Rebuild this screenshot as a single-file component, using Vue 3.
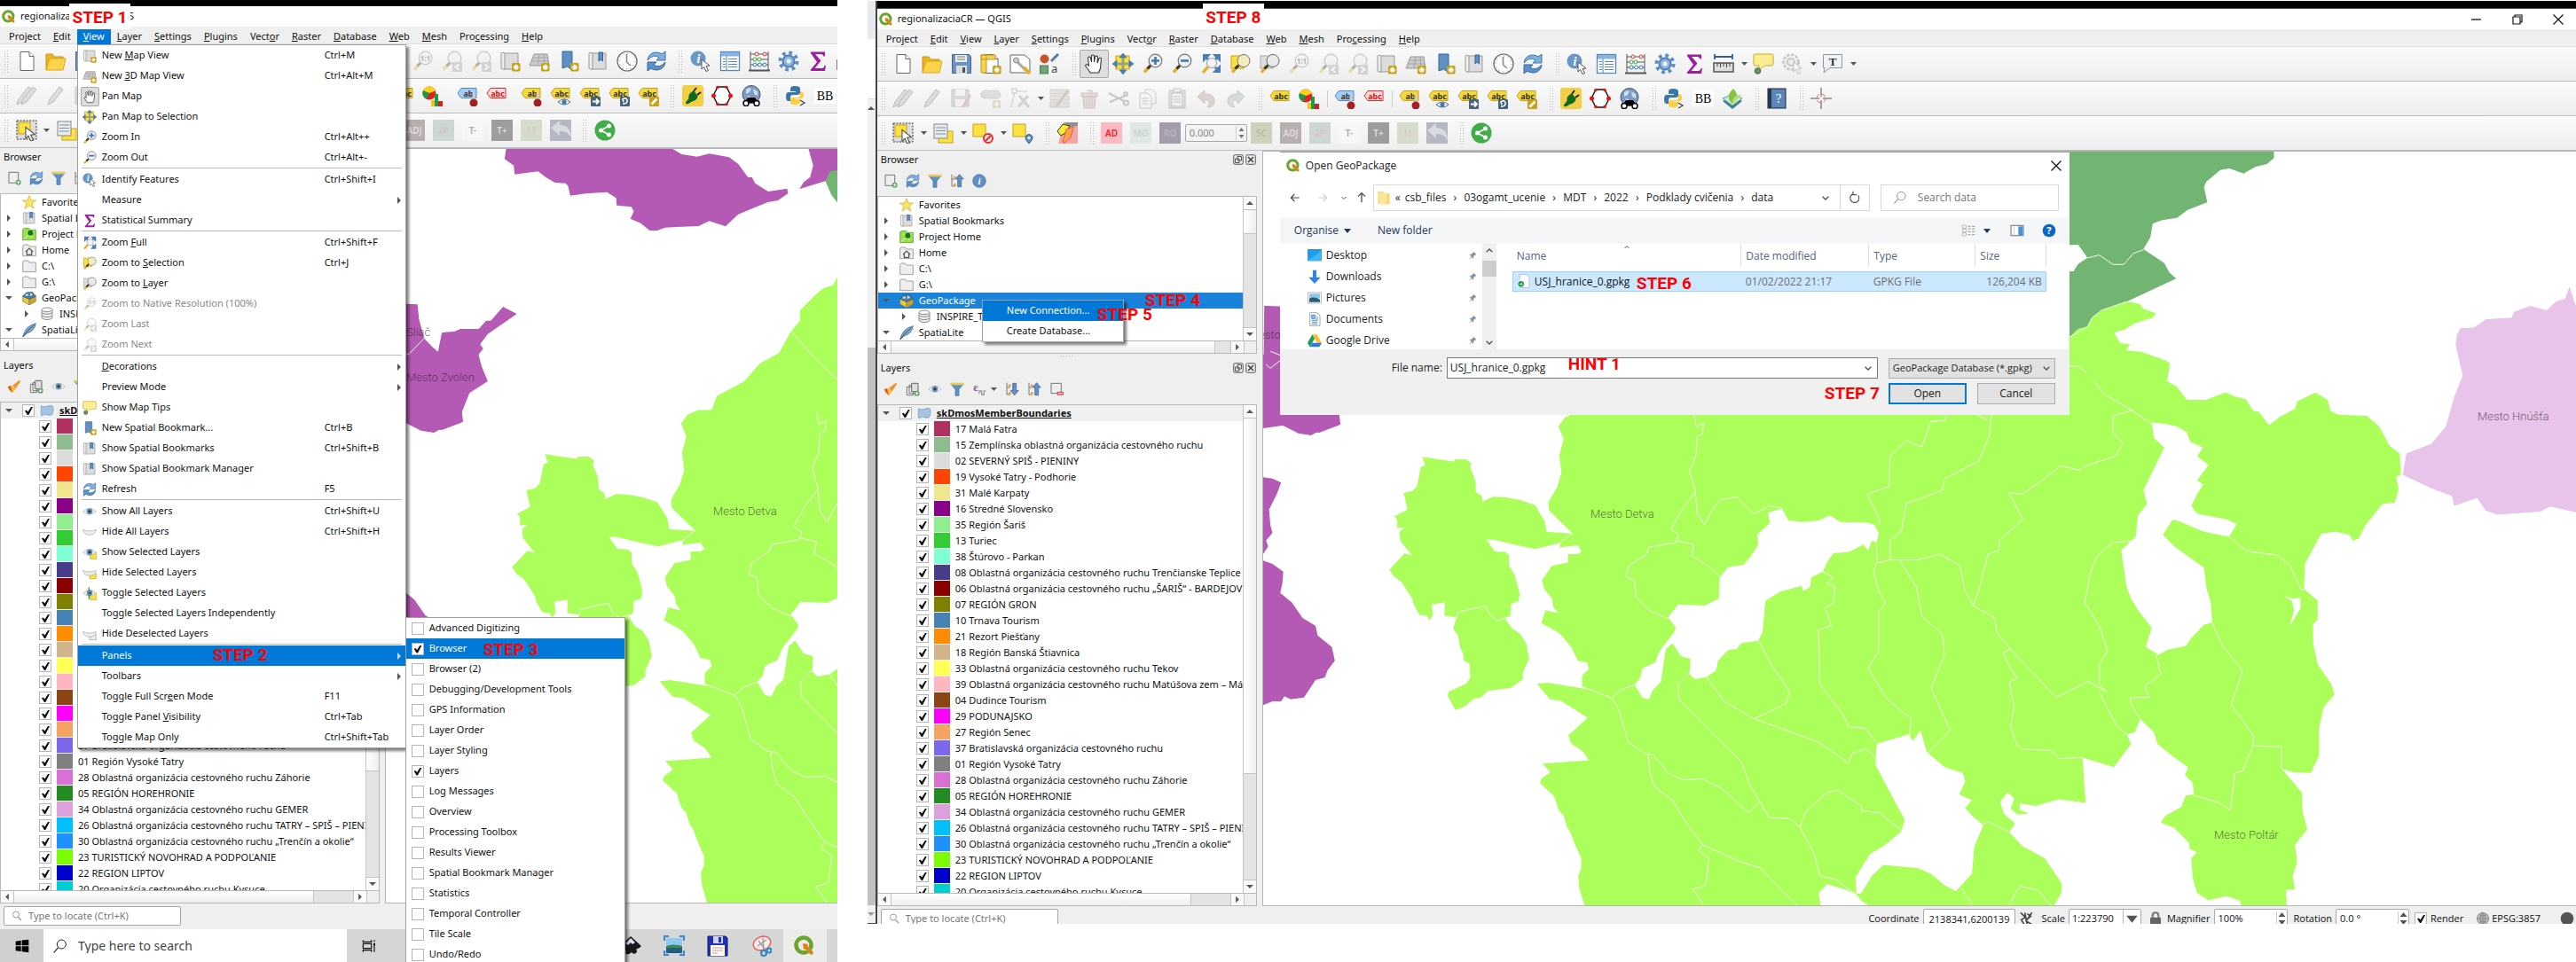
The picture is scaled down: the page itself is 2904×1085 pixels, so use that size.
<script setup>
const mark = (s) => {
  const i = s.indexOf('&')
  return i < 0 ? [s, '', ''] : [s.slice(0, i), s[i + 1], s.slice(i + 2)]
}

const badge = '<rect x="14" y="14" width="9.500" height="9.500" rx="1.500" fill="#c8a21a"/><path d="M18.800 15.500v6.600M15.500 18.800h6.600M16.600 16.600l4.400 4.400M21 16.600l-4.400 4.400" stroke="#fff" stroke-width="1.200"/>'
const lens = '<path d="M9.500 14.500L3 21.500" stroke="#e0b02c" stroke-width="3.400"/><path d="M10.500 13.500L6.500 17.500" stroke="#333" stroke-width="3"/>'
const ring = '<circle cx="15.500" cy="8.500" r="7.300" fill="#e9eef0" fill-opacity=".85" stroke="#777" stroke-width="1.200"/>'
const page = '<path d="M5 1.500h10l5 5v16H5z" fill="#fff" stroke="#666"/><path d="M15 1.500v5h5" fill="#fff" stroke="#666"/>'
const tag = (fill, line, ink, txt) => `<path d="M1 9l4-5.500h17v11H5z" fill="${fill}" stroke="${line}"/><text x="13" y="12.500" font-size="9" font-weight="700" text-anchor="middle" fill="${ink}">${txt}</text>`
const yTag = (t) => tag('#f3d93c', '#c8a21a', '#333', t)
const tile = (bg, ink, txt) => `<rect width="24" height="24" fill="${bg}"/><text x="12" y="16" font-size="10" font-weight="600" text-anchor="middle" fill="${ink}">${txt}</text>`
const sheet = '<path d="M4 3h17v18H4z" fill="#dcdcdc" stroke="#999"/><path d="M2 3q4-2 4 2v16H3.500q-2 0-1.500-3z" fill="#eee" stroke="#999"/>'
const eye = '<path d="M1 12q11-11 22 0-11 10-22 0z" fill="#f1f1ee" stroke="#aaa"/><circle cx="12" cy="11.500" r="5" fill="#6d93b8"/><circle cx="12" cy="11.500" r="2.300" fill="#234"/>'
const lid = '<path d="M1 8q11 5 22 0-1 9-11 9T1 8z" fill="#eceee8" stroke="#aaa"/>'
const folder = '<path d="M1 5l2-2h7l2 3h11v16H1z" fill="#eee" stroke="#999" stroke-width="1.400"/>'
const cursor = '<path d="M13 10l9 7-4 .500 2.500 5-2.500 1-2.300-5-2.700 2.500z" fill="#fff" stroke="#555"/>'
const pen = '<path d="M3 22l2-6L16 2l4 3L9 19z" fill="#ddd" stroke="#bbb"/>'

const icons = {
  qgis: '<circle cx="11" cy="11" r="8.500" fill="none" stroke="#6aa52c" stroke-width="4.500"/><path d="M11 11l3-1 8 9-3 3-8-8z" fill="#8bbf3a"/><path d="M10 9l6 1-1 2 7 8-2 2-7-7-2 1z" fill="#ee7913"/>',
  page,
  open: '<path d="M1 22V4h7l2 3h10v3" fill="#e8b523" stroke="#c9971a"/><path d="M1 22L5 9h18l-3 13z" fill="#fbd44a" stroke="#d9a520"/>',
  save: '<path d="M1.500 1.500h19l2 2v19h-21z" fill="#6c93c2" stroke="#3f6593"/><path d="M5 2h13v8H5z" fill="#eee"/><path d="M7 4h9M7 7h9" stroke="#777"/><path d="M6 14h12v9H6z" fill="#ddd"/><path d="M13 16h3v6h-3z" fill="#456"/>',
  layout: page + '<path d="M1 2h6v20H1zM1 2h16v5H1z" fill="#f3d257" stroke="#c39a17"/>' + badge,
  layouts: '<path d="M1 2h16l6 5v15H1z" fill="#fff" stroke="#666"/><path d="M7 8l11 11" stroke="#aaa" stroke-width="3"/><circle cx="7.500" cy="8" r="3" fill="#ccc" stroke="#888"/><path d="M16 16l7 7" stroke="#e0b02c" stroke-width="4"/>',
  style: '<circle cx="6.500" cy="6.500" r="5" fill="#c8532d"/><path d="M14 9l8-8" stroke="#4f7db3" stroke-width="3"/><rect x="1.500" y="14" width="9" height="9" fill="#6fa67a" stroke="#4a7c55"/><text x="14" y="22" font-size="13" fill="#444">a</text>',
  hand: '<path d="M8 22q-3-5-5.500-8 1-2.500 4 0L5.500 5q1.500-2 3 0l1 5V3q1.500-2 3 0v7l1-6q1.500-2 3 0l-.500 7 2-5q1.500-1.500 2.500 0l-1 11q-1 3-2 5z" fill="#fff" stroke="#333" stroke-width="1.100"/>',
  pansel: '<rect x="4" y="3" width="15" height="15" fill="#fbe23e" stroke="#c8a21a"/><path d="M12 0l4 5H8zM12 24l4-5H8zM0 12l5-4v8zM24 12l-5-4v8z" fill="#4f7db3" stroke="#34618f" stroke-width=".500"/><path d="M10.500 4h3v16h-3zM4 10.500h16v3H4z" fill="#4f7db3" fill-opacity=".6"/>',
  zin: lens + ring + '<path d="M15.500 4v9M11 8.500h9" stroke="#4a76ad" stroke-width="2.600"/>',
  zout: lens + ring + '<path d="M11 8.500h9" stroke="#4a76ad" stroke-width="2.600"/>',
  zfull: '<path d="M4 2l6 0-6 6zM22 2h-6l6 6zM22 21h-6l6-6z" fill="#4f7db3" stroke="#4f7db3" stroke-width="2"/><path d="M5 3l4 4M21 3l-4 4M21 20l-4-4" stroke="#4f7db3" stroke-width="3"/><circle cx="13" cy="11" r="5.500" fill="#f2f4f4" stroke="#999"/><path d="M9 15l-6 7" stroke="#e0b02c" stroke-width="3.400"/>',
  zsel: '<rect x="2" y="3" width="14" height="14" fill="#fbe23e" stroke="#c8a21a"/>' + lens + '<circle cx="16" cy="8.500" r="7" fill="#f3ecc0" stroke="#777"/>',
  zlay: '<rect x="2" y="3" width="14" height="14" fill="#ddd" stroke="#aaa"/>' + lens + '<circle cx="16" cy="8.500" r="7" fill="#eaeaea" stroke="#666"/>',
  znat: '<g opacity=".35">' + lens + ring + '<text x="15.500" y="12" font-size="8" font-weight="700" text-anchor="middle" fill="#333">1:1</text></g>',
  zlast: '<g opacity=".35">' + lens + ring + '<rect x="13" y="13" width="11" height="11" fill="#999"/><path d="M20.500 15.500l-4 3 4 3" fill="none" stroke="#fff" stroke-width="2"/></g>',
  znext: '<g opacity=".35">' + lens + ring + '<rect x="13" y="13" width="11" height="11" fill="#999"/><path d="M16.500 15.500l4 3-4 3" fill="none" stroke="#fff" stroke-width="2"/></g>',
  newmap: sheet + badge,
  new3d: '<path d="M6 4h15l2 13H1z" fill="#ccc" stroke="#999"/><path d="M5 8h17M3 12h19M12 4l-2 13M17 4l1 13" stroke="#999" stroke-width=".700"/>' + badge,
  bmnew: '<path d="M5 1h11v21l-5.500-4L5 20z" fill="#5f8fc4" stroke="#3c6794"/>' + badge,
  bms: sheet + '<path d="M13 2h4.500v10l-2.200-2-2.300 2z" fill="#5f8fc4" stroke="#34618f"/>',
  clock: '<circle cx="12" cy="12" r="11" fill="#fdfdfd" stroke="#666" stroke-width="1.200"/><circle cx="12" cy="12" r="9" fill="none" stroke="#5588bb" stroke-dasharray="1 3.700"/><path d="M11.500 4v9l4.500 4" fill="none" stroke="#888" stroke-width="1.600"/>',
  refresh: '<path d="M2 11q1-8 9-9 5 0 7 2l4-3v10H12l3-3q-6-5-13 3z" fill="#7fb0e0" stroke="#3f74ad"/><path d="M22 13q-1 8-9 9-5 0-7-2l-4 3V13h10l-3 3q6 5 13-3z" fill="#5c92cb" stroke="#34659b"/>',
  ident: '<circle cx="9" cy="9" r="8.500" fill="#6b97c8"/><text x="9.500" y="14" font-size="14" font-style="italic" font-weight="700" text-anchor="middle" fill="#fff" font-family="Liberation Serif">i</text>' + cursor,
  info: '<circle cx="12" cy="12" r="11" fill="#5f8fc4" stroke="#43719f"/><text x="12" y="18" font-size="17" font-style="italic" font-weight="700" text-anchor="middle" fill="#fff" font-family="Liberation Serif">i</text>',
  table: '<rect x="1.500" y="1.500" width="21" height="21" fill="#fff" stroke="#5588bb" stroke-width="1.300"/><path d="M2 2h20v4.500H2z" fill="#8ab3df"/><path d="M8 6v16M4 9.500h3M4 12.500h3M4 15.500h3M4 18.500h3M10 9.500h10M10 12.500h10M10 15.500h10M10 18.500h10" stroke="#5588bb"/>',
  abacus: '<path d="M2 1v21M22 1v21M2 4h20M2 10h20M2 16h20" stroke="#555" fill="none"/><path d="M0 22.500h24" stroke="#555" stroke-width="2"/><g fill="#fff"><g stroke="#d33"><circle cx="9" cy="4" r="2"/><circle cx="18" cy="4" r="2"/></g><g stroke="#3a3"><circle cx="7" cy="10" r="2"/><circle cx="12" cy="10" r="2"/></g><g stroke="#37b"><circle cx="7" cy="16" r="2"/><circle cx="12.500" cy="16" r="2"/><circle cx="18" cy="16" r="2"/></g></g>',
  gear: '<circle cx="12" cy="12" r="9.500" fill="none" stroke="#5b8cc4" stroke-width="4" stroke-dasharray="3.700 3.760"/><circle cx="12" cy="12" r="6.500" fill="#8fb6e2" stroke="#4f7fb8" stroke-width="2"/><circle cx="12" cy="12" r="2.500" fill="#f4f4f4"/>',
  sigma: '<path d="M4 1.500h16v5h-1.500q-.500-2.500-3-2.500H9l6.500 7.500L8.500 20h8q2.500 0 3-3H21l-1 6H4v-1.500L11 13 4 3z" fill="#9b1f9b"/>',
  measure: '<path d="M2 1v6M22 1v6M2 4h20" stroke="#345f8c" stroke-width="1.800"/><path d="M1 11h22v10H1z" fill="#ddd" stroke="#555" stroke-width="1.500"/><path d="M5 11v4M8.500 11v5M12 11v4M15.500 11v5M19 11v4" stroke="#444"/>',
  tip: '<path d="M3 1h18q2 0 2 2v9q0 2-2 2h-8l-6 5v-5H3q-2 0-2-2V3q0-2 2-2z" fill="#fbee90" stroke="#c8a92a"/><circle cx="5.500" cy="20" r="3.300" fill="#6b8f5a" stroke="#466"/>',
  action: '<g opacity=".3"><circle cx="10" cy="10" r="8.500" fill="#ddd" stroke="#555" stroke-width="2.500" stroke-dasharray="3 2"/><circle cx="10" cy="10" r="4" fill="none" stroke="#666" stroke-width="2"/>' + cursor + '</g>',
  tnote: '<path d="M1.500 1.500h21v15H9L2 22l1-5.500H1.500z" fill="#eff3f5" stroke="#8a98a5"/><text x="12" y="13.500" font-size="13" font-weight="700" text-anchor="middle" fill="#333" font-family="Liberation Serif">T</text>',
  pens: '<g transform="translate(-2 0)">' + pen + '</g><g transform="translate(3 0)">' + pen + '</g>',
  pen,
  savee: '<g opacity=".3"><path d="M1 2h19v19H1z" fill="#999" stroke="#666"/><path d="M5 2h11v7H5zM5 13h11v8H5z" fill="#eee"/><path d="M13 22l9-14" stroke="#a66" stroke-width="3"/></g>',
  addf: '<g opacity=".4"><path d="M1 8q0-5 6-5 4 1 8 0 8 0 8 6-1 4-7 3-8-1-11 0-4 0-4-4z" fill="#bbb" stroke="#999"/><rect x="14" y="14" width="9" height="9" fill="#cbb98a"/><path d="M18.500 15.500v6M15.500 18.500h6" stroke="#fff" stroke-width="1.500"/></g>',
  vert: '<g opacity=".45"><path d="M2 22L6 4h14" fill="none" stroke="#999"/><rect x="3" y="1" width="5" height="5" fill="#fff" stroke="#888"/><path d="M10 21L21 9M11 9l11 13" stroke="#aaa" stroke-width="3"/></g>',
  multi: '<g opacity=".4"><path d="M1 2h21v5H1zM1 9h21v5H1zM1 16h21v6H1z" fill="#c9c9b4" stroke="#999"/><path d="M8 21L21 3" stroke="#a88" stroke-width="3"/></g>',
  bin: '<g opacity=".45"><path d="M3 6h18v4H3zM5 10h14l-1 13H6zM9 3h6v3" fill="#d4bcbc" stroke="#a88"/><path d="M9 12v9M12 12v9M15 12v9" stroke="#a99"/></g>',
  cut: '<g opacity=".35" stroke="#777" fill="none" stroke-width="2"><path d="M1 6l17 9M2 16l20-8"/><circle cx="20.500" cy="17" r="2.600"/><circle cx="20" cy="7" r="2"/></g>',
  copy: '<g opacity=".45" fill="#f4f4f4" stroke="#999"><path d="M9 2h8l4 4v12H9z"/><path d="M3 6h9l4 4v13H3z"/><path d="M5.500 12h7M5.500 15h7M5.500 18h7"/></g>',
  paste: '<g opacity=".45" fill="#eee" stroke="#888"><rect x="3" y="3" width="18" height="20" fill="#ccc"/><rect x="6" y="6" width="12" height="15"/><path d="M8 1h8v4H8zM8 10h8M8 13h8M8 16h8"/></g>',
  undo: '<path d="M2 10l8-7v4q12 0 11 9-1 6-8 6 6-9-3-8v4z" fill="#ddd4d2" stroke="#cfc6c4"/>',
  redo: '<path d="M22 10l-8-7v4Q2 7 3 16q1 6 8 6-6-9 3-8v4z" fill="#d6dcd8" stroke="#c6cec9"/>',
  abc: yTag('abc'),
  diag: '<circle cx="8" cy="9" r="7.500" fill="#d22"/><path d="M8 9V1.500a7.500 7.500 0 0 1 7 5z" fill="#f6d21c"/><path d="M8 9L1 6.500a7.500 7.500 0 0 1 7-5z" fill="#f6d21c"/><path d="M8 9L1 6a7.500 7.500 0 0 0 4 10z" fill="#1c9a4a"/><path d="M10 17h4v7h-4z" fill="#f6c21c"/><path d="M14 10h4v14h-4z" fill="#1c9a4a"/><path d="M18 18h5v6h-5z" fill="#c22"/>',
  abb: tag('#a9ccf5', '#4a8ad6', '#333', 'ab') + '<path d="M19 9v9" stroke="#ccc" stroke-width="3"/><circle cx="19" cy="20" r="4.500" fill="#a32020"/>',
  abr: tag('#fdd', '#e22', '#d11', 'abc'),
  aby: yTag('ab') + '<path d="M19 9v9" stroke="#ccc" stroke-width="3"/><circle cx="19" cy="20" r="4.500" fill="#a32020"/>',
  abe: yTag('abc') + '<path d="M9 19q7-6 14 0-7 6-14 0z" fill="#fff" stroke="#567"/><circle cx="16" cy="19" r="2.600" fill="#357bc0"/>',
  abm: yTag('abc') + '<rect x="13" y="13" width="11" height="11" rx="1" fill="#46647d"/><path d="M15 18.500h7M19 15.500l3 3-3 3" stroke="#fff" stroke-width="1.800" fill="none"/>',
  abo: yTag('abc') + '<rect x="13" y="13" width="11" height="11" rx="1" fill="#46647d"/><path d="M16 21q6 0 5-4t-5-1l1 3" stroke="#fff" stroke-width="1.600" fill="none"/>',
  abp: yTag('abc') + '<rect x="13" y="13" width="11" height="11" rx="1" fill="#c8a21a"/><path d="M15.500 21.500l6-6" stroke="#fff" stroke-width="2.600"/>',
  plug: '<rect width="24" height="24" rx="3" fill="#f3cf45"/><path d="M4 20l4-5q-1-6 5-8l4 5q0 5-6 6l-5 3z" fill="#0d6b18" stroke="#063"/><path d="M13 7l3-4M17 11l4-3" stroke="#222" stroke-width="2"/>',
  hexa: '<path d="M2 12l5-10h10l5 10-5 10H7z" fill="#fff" stroke="#111" stroke-width="1.400"/><g fill="#e11"><circle cx="2.500" cy="12" r="2.500"/><circle cx="21.500" cy="12" r="2.500"/><circle cx="7" cy="2.500" r="1.800"/><circle cx="17" cy="2.500" r="1.800"/><circle cx="7" cy="21.500" r="1.800"/><circle cx="17" cy="21.500" r="1.800"/></g>',
  bino: '<circle cx="12" cy="10.500" r="10" fill="#7c9cc4" stroke="#456"/><path d="M6 5q3-3 6-1l-2 4-4 2zM14 4l5 3v5l-4-2zM7 12l4 1-1 4z" fill="#cfdcea"/><path d="M4 20l4-6h8l4 6z" fill="#000"/><circle cx="6" cy="20.500" r="3" fill="#fff" stroke="#000" stroke-width="1.500"/><circle cx="18" cy="20.500" r="3" fill="#fff" stroke="#000" stroke-width="1.500"/>',
  py: '<path d="M11 1q-5 0-5 3v3h6v1H4q-3 0-3 5t3 5h2v-4q0-3 3-3h5q3 0 3-3V4q0-3-6-3z" fill="#3b76a8"/><path d="M12 22q5 0 5-3v-3h-6v-1h8q2-1 2-4t-3-4h-1v4q0 3-3 3H9q-3 0-3 3v3q1 2 6 2z" fill="#fbcf3c"/><path d="M17 17l5 3-5 3" fill="none" stroke="#444" stroke-width="1.300"/>',
  bb: '<rect y="3" width="24" height="18" fill="#fff"/><text x="12" y="17" font-size="14" text-anchor="middle" fill="#000" font-family="Liberation Serif">BB</text>',
  leaf: '<path d="M1 15l11-6 11 6-11 9z" fill="#3f7f8c"/><path d="M1 12l11-5 11 5-11 8z" fill="#cfe6dd" stroke="#5a9"/><path d="M12 18Q3 10 13 1q9 9-1 17z" fill="#86c540"/><path d="M12 18q6-5 10-10-10-1-10 10z" fill="#b9dc6a"/>',
  help: '<rect x="2" y="1" width="20" height="22" fill="#5b86b8" stroke="#223"/><path d="M2 1h4v22H2z" fill="#27364a"/><text x="14" y="17" font-size="15" text-anchor="middle" fill="#fff" font-family="Liberation Serif">?</text>',
  cross: '<path d="M12 0v10M12 14v10M0 12h10M14 12h10" stroke="#555"/><circle cx="12" cy="12" r="5" fill="none" stroke="#d66" stroke-dasharray="5 3"/>',
  sel: '<rect x="1" y="1" width="22" height="21" fill="#ddd" stroke="#333" stroke-dasharray="2 1.500"/><rect x="3" y="3" width="13" height="13" fill="#fbe23e" stroke="#c8a21a"/><g transform="translate(-4 -3) scale(1.150)">' + cursor + '</g>',
  form: '<rect x="7" y="10" width="16" height="13" fill="#fbe23e" stroke="#c8a21a"/><rect x="2" y="2" width="15" height="16" fill="#e8eaec" stroke="#888"/><path d="M4 6h11M4 9.500h11M4 13h11" stroke="#7a93ad"/>',
  desel: '<rect x="1" y="2" width="14" height="14" fill="#fbe23e" stroke="#c8a21a"/><circle cx="18" cy="18" r="5" fill="#fbe9e9" stroke="#d33" stroke-width="2"/><path d="M15 21l6-6" stroke="#d33" stroke-width="2"/>',
  selloc: '<rect x="1" y="2" width="14" height="14" fill="#fbe23e" stroke="#c8a21a"/><path d="M19 24q-5-5-4-8 4-5 8 0 1 3-4 8z" fill="#5f8fc4" stroke="#34618f"/><circle cx="19" cy="17.500" r="1.600" fill="#fff"/>',
  topo: '<path d="M8 0h16v24H2l3-12z" fill="#f6a5a5"/><path d="M8 0h16v4l-8 1z" fill="#8f8f8f"/><path d="M1 10l6-8 8 2-5 8-5 3z" fill="#f7ef2e" stroke="#333"/><path d="M7 22l4-14 8-3-3 12-7 6z" fill="#f9a34a" stroke="#e55"/>',
  ad: tile('#fbb9c3', '#e22', 'AD'),
  mo: tile('#dfe8e2', '#c9d6cd', 'MO'),
  ro: tile('#a39dab', '#bcb3c4', 'RO'),
  sc: tile('#cfd1bd', '#b7bca2', 'SC'),
  adj: tile('#b8afaf', '#e2dcdc', 'ADJ'),
  p2: tile('#ccd6d4', '#d9c3c6', '2P'),
  tm: tile('#f7f7f7', '#aaa', 'T-'),
  tp: tile('#9d9d9d', '#ddd', 'T+'),
  ex: tile('#d5dccb', '#dcc0c0', '! !'),
  back: '<rect width="24" height="24" fill="#b5b7c2"/><path d="M1 9l10-8v5q12 0 13 14-5-8-13-7v5z" fill="#d9dbe0"/>',
  share: '<circle cx="12" cy="12" r="11.500" fill="#41ad49"/><path d="M16.500 7l-9 5 9 5" fill="none" stroke="#fff" stroke-width="1.600"/><g fill="#fff"><circle cx="16.500" cy="7" r="2.500"/><circle cx="7.500" cy="12" r="2.500"/><circle cx="16.500" cy="17" r="2.500"/></g>',
  addlay: '<path d="M3 2h16v18H3z" fill="#eee" stroke="#777" stroke-width="1.500"/><circle cx="19" cy="19" r="4.500" fill="#5fa56a"/><path d="M19 16.500v5M16.500 19h5" stroke="#fff" stroke-width="1.500"/>',
  filter: '<path d="M1 3h22l-8 9v11h-6V12z" fill="#5f8fc4" stroke="#43719f"/><path d="M1 1h22v4H1z" fill="#e6cf56"/>',
  collapse: '<path d="M3 1v20h5M3 9h5" fill="none" stroke="#777" stroke-width="1.500"/><path d="M6 4h4v4H6zM6 17h4v4H6z" fill="#f29a2e"/><path d="M16 1l7 8h-4v13h-6V9H9z" fill="#5f8fc4" stroke="#34618f"/>',
  expand: '<path d="M3 1v20h5M3 9h5" fill="none" stroke="#777" stroke-width="1.500"/><path d="M6 4h4v4H6zM6 17h4v4H6z" fill="#f29a2e"/><path d="M16 22l7-8h-4V2h-6v12H9z" fill="#5f8fc4" stroke="#34618f"/>',
  brush: '<path d="M1 12l7-2 6 7-5 6q-5-3-8-11z" fill="#f2c13a"/><path d="M1 12l5-1 3 11q-5-3-8-10z" fill="#e0542c"/><path d="M9 10l5 6 9-13q-2-2-3-1z" fill="#e9963a"/>',
  group: '<path d="M2 8h11v14H2zM6 5h11v14H6z" fill="#eee" stroke="#777" stroke-width="1.500"/><path d="M10 2h11v14H10z" fill="#ddd" stroke="#666" stroke-width="1.500"/><circle cx="19" cy="19" r="4.500" fill="#5fa56a"/><path d="M19 16.500v5M16.500 19h5" stroke="#fff" stroke-width="1.500"/>',
  eye, lid,
  eyesel: '<path d="M13 12h11v11H13z" fill="#fbe23e" stroke="#c8a21a"/>' + eye,
  lidsel: '<path d="M12 13h11v9H12z" fill="#fbe23e" stroke="#c8a21a"/>' + lid,
  toggle: '<path d="M13 12h11v11H13z" fill="#fbe23e" stroke="#c8a21a"/>' + eye + '<path d="M11 2v20" stroke="#4a9a4a" stroke-width="2"/>',
  liddes: '<path d="M12 13h11v9H12z" fill="#eee" stroke="#999"/>' + lid,
  eps: '<text x="2" y="15" font-size="20" font-weight="700" fill="#8a5a9a" font-family="Liberation Serif">ε</text><path d="M12 20v-5h4v6h4v-6h3" fill="none" stroke="#999" stroke-width="2"/>',
  remove: '<path d="M3 2h17v17H3z" fill="#eee" stroke="#777" stroke-width="1.500"/><rect x="13" y="16" width="11" height="6" rx="1" fill="#e05252"/><path d="M15 19h7" stroke="#fff" stroke-width="1.600"/>',
  star: '<path d="M12 1l3 8h8.500l-7 5 3 9L12 17.500 4.500 23l3-9-7-5H9z" fill="#fbe564" stroke="#d0a818"/>',
  proj: '<path d="M1 4l3-2h7l2 3h10v17H1z" fill="#9be04a" stroke="#4a8a2a"/><path d="M3 20L20 7M9 8l8 10" stroke="#e8f7c8" stroke-width="1.500"/><circle cx="14" cy="10" r="4.500" fill="#137a1b"/>',
  home: folder + '<path d="M6 15l6-6 6 6M8 14v6h8v-6" fill="none" stroke="#555" stroke-width="1.800"/>',
  folder,
  gpkg: '<path d="M1 9l11 5v10L1 18z" fill="#e9c93a" stroke="#775"/><path d="M23 9l-11 5v10l11-6z" fill="#c9a52a" stroke="#775"/><path d="M1 9l6-6 10-1 6 7-11 5z" fill="#4f7ea8" stroke="#345"/><path d="M7 5l4 1-2 3-4-1zM14 3l4 4-5 2z" fill="#cfe0ee"/>',
  db: '<path d="M3 5v14q9 6 18 0V5" fill="#eee" stroke="#888" stroke-width="1.400"/><ellipse cx="12" cy="5" rx="9" ry="3.500" fill="#f6f6f6" stroke="#888" stroke-width="1.400"/><path d="M3 10q9 5 18 0M3 15q9 5 18 0" fill="none" stroke="#888" stroke-width="1.400"/>',
  feather: '<path d="M1 24Q5 5 23 1q-1 12-15 17z" fill="#7aa6cf" stroke="#335a80"/><path d="M1 24Q9 12 20 4" stroke="#234" fill="none"/>',
  poly: '<path d="M2 4q6 3 10 1 6-3 10 0 2 6-1 13-3 4-9 1-5-2-9 2-2-2-1-8z" fill="#a6c4e2" stroke="#6d95bd"/>',
  mag: '<circle cx="10" cy="9" r="7" fill="none" stroke="#999" stroke-width="2"/><path d="M15 15l7 7" stroke="#999" stroke-width="2.400"/>',
  float: '<rect x="1.500" y="1.500" width="21" height="21" rx="3" fill="#eee" stroke="#555" stroke-width="2"/><path d="M10 5h9v9h-9zM5 10h9v9H5z" fill="none" stroke="#555" stroke-width="2"/>',
  close: '<rect x="1.500" y="1.500" width="21" height="21" rx="3" fill="#eee" stroke="#555" stroke-width="2"/><path d="M6 6l12 12M18 6L6 18" stroke="#444" stroke-width="3.400"/>',
  winmin: '<path d="M6 12h11" stroke="#111" stroke-width="1.300"/>',
  winres: '<path d="M7 9h8v8H7zM9 9V7h8v8h-2" fill="none" stroke="#111" stroke-width="1.200"/>',
  winx: '<path d="M6.500 6.500l11 11M17.500 6.500l-11 11" stroke="#111" stroke-width="1.200"/>',
  left: '<path d="M19 12H5M11 6l-6 6 6 6" fill="none" stroke="#444" stroke-width="1.700"/>',
  right: '<path d="M5 12h14M13 6l6 6-6 6" fill="none" stroke="#ccc" stroke-width="1.700"/>',
  up: '<path d="M12 20V4M6 10l6-6 6 6" fill="none" stroke="#444" stroke-width="1.900"/>',
  down: '<path d="M7 10l5 5 5-5" fill="none" stroke="#555" stroke-width="2"/>',
  caretup: '<path d="M7 14l5-5 5 5" fill="none" stroke="#555" stroke-width="2"/>',
  reload: '<path d="M17.500 8a7.500 7.500 0 1 1-8-2.500M9 1v6h6" fill="none" stroke="#555" stroke-width="1.800"/>',
  search: '<circle cx="14" cy="9" r="7" fill="none" stroke="#999" stroke-width="1.500"/><path d="M9 14l-7 8" stroke="#999" stroke-width="1.700"/>',
  views: '<g fill="#fff" stroke="#999"><path d="M2 3h6v5H2zM2 9.500h6v5H2zM2 16h6v5H2z"/></g><path d="M11 5h5M18 5h5M11 9h5M18 9h5M11 14h5M18 14h5M11 19h5M18 19h5" stroke="#999" stroke-width="1.500"/>',
  pane: '<rect x="1.500" y="3.500" width="21" height="17" fill="#fff" stroke="#777" stroke-width="1.600"/><path d="M14 5h7.500v15H14z" fill="#3d94e0"/><path d="M7 5v15" stroke="#bbb"/>',
  ask: '<circle cx="12" cy="12" r="11" fill="#0a66c2"/><text x="12" y="18" font-size="17" font-weight="700" text-anchor="middle" fill="#fff">?</text>',
  fold: '<path d="M2 2h9l3 3h8v18H2z" fill="#f7d774"/><path d="M4 4h13v19H4z" fill="#fde79b"/>',
  desktop: '<rect x="1" y="2" width="22" height="19" fill="#1e9df0" stroke="#0b76c4"/><path d="M1 21L23 5v16z" fill="#43b4fa"/>',
  dl: '<path d="M9 1h6v12h7L12 24 2 13h7z" fill="#2f86d8"/>',
  pics: '<rect x="1" y="3" width="22" height="18" fill="#fff" stroke="#999"/><path d="M3 5h18v8H3z" fill="#8cc4ea"/><path d="M3 13q9-4 18 2v4H3z" fill="#2b5b7d"/>',
  docs: '<path d="M4 1h12l5 5v17H4z" fill="#fff" stroke="#777"/><path d="M7 5h6v6H7zM7 14h10M7 17h10M7 20h10M15 9h3M15 12h3" stroke="#4a90d0" fill="#8cc0ee" stroke-width="1.500"/>',
  gdrive: '<path d="M8 2h8l8 14h-8z" fill="#fbc02d"/><path d="M8 2L0 16l4 7 8-14z" fill="#1e9e57"/><path d="M24 16H8l-4 7h16z" fill="#3079e8"/>',
  pin: '<path d="M12 2l9 8-3 1-4 4v5l-4-4-6 6 5-8-4-4 5-1 4-4z" fill="#8895a3"/>',
  gfile: '<path d="M5 1h11l5 5v17H5z" fill="#fff" stroke="#aaa"/><circle cx="7" cy="17" r="6" fill="#fff"/><circle cx="7" cy="17" r="5" fill="#1b9a4b"/><path d="M4 17h5M7 14.500l2.500 2.500L7 19.500" stroke="#fff" fill="none"/>',
  lock: '<path d="M7 11V7q0-5 5-5t5 5v4" fill="none" stroke="#777" stroke-width="3"/><rect x="3" y="10" width="18" height="14" rx="2" fill="#666"/>',
  track: '<path d="M3 2l8 8-7 4 5 8M10 2l4 20M14 4l6 4-7 6M22 2L12 16l10 6" fill="none" stroke="#444" stroke-width="2.400"/>',
  globe: '<circle cx="12" cy="12" r="10" fill="#bbb" stroke="#777"/><path d="M2 12h20M12 2v20M5 5q7 5 14 0M5 19q7-5 14 0M12 2q-9 10 0 20M12 2q9 10 0 20" fill="none" stroke="#777"/>',
  bubble: '<circle cx="12" cy="12" r="11" fill="#555"/>',
  win: '<path d="M1 4l9-1.500V11H1zM11.500 2.300L23 1v10H11.500zM1 12.500h9V21l-9-1.300zM11.500 12.500H23V23l-11.500-1.500z" fill="#000"/>',
  srch: '<circle cx="14" cy="9" r="7.500" fill="none" stroke="#222" stroke-width="1.500"/><path d="M8.500 14.500L1 23" stroke="#222" stroke-width="1.700"/>',
  tview: '<path d="M2 8h14v8H2zM2 2v3h14V2M2 22v-3h14v3M21 2v3M21 9v13" fill="none" stroke="#111" stroke-width="1.800"/><path d="M19.500 7h3v4h-3z" fill="#111"/>',
  exp: '<path d="M1 2h9l3 3h10v18H1z" fill="#f9c23c"/><path d="M6 13h17v10H6z" fill="#3d94e0"/>',
  ink: '<path d="M12 1l12 11q-3 4-6 3 2 3 0 5-3 2-5-1-4 4-7 1 2-3-1-4-5 0-5-4z" fill="#1a1a1a"/><path d="M12 3l5 5-3 2-2-2-3 3-3-2z" fill="#dfe8f2"/>',
  shot: '<rect x="3" y="3" width="18" height="17" fill="#8fc9ef"/><path d="M3 13h18v7H3z" fill="#1d5f86"/><path d="M3 12q8-3 18 0v2H3z" fill="#3c8a50"/><path d="M1 6V1h5M18 1h5v5M23 17v5h-5M6 22H1v-5" stroke="#3c86c8" stroke-width="2" fill="none"/>',
  disk: '<path d="M1 1h20l2 2v20H1z" fill="#2230b8" stroke="#111a70"/><path d="M7 1h11v8H7z" fill="#cdd3f2"/><path d="M13 2h3v6h-3z" fill="#2230b8"/><path d="M4 11h16v12H4z" fill="#fff"/><path d="M6 14h12M6 17h12M6 20h6" stroke="#e88"/>',
  snip: '<ellipse cx="13" cy="9" rx="10" ry="7.500" transform="rotate(-20 13 9)" fill="#fbeaea" stroke="#e06a6a" stroke-width="1.600"/><path d="M8 12l10-7M14 3l1 14M9 6l9 12" stroke="#999" stroke-width="1.300"/><circle cx="15" cy="20" r="3" fill="none" stroke="#2f86c8" stroke-width="2"/><circle cx="21" cy="17" r="2.500" fill="none" stroke="#2f86c8" stroke-width="2"/>',
}

const menubar = ['Pro&ject', '&Edit', '&View', '&Layer', '&Settings', '&Plugins', 'Vect&or', '&Raster', '&Database', '&Web', '&Mesh', 'Pro&cessing', '&Help']

const bars = [
  ['|', 'page', 'open', 'save', 'layout', 'layouts', 'style', '|', 'hand*', 'pansel', 'zin', 'zout', 'zfull', 'zsel', 'zlay', 'znat', 'zlast', 'znext', 'newmap', 'new3d', 'bmnew', 'bms', 'clock', 'refresh', '|', 'ident', 'table', 'abacus', 'gear', 'sigma', 'measure', 'v', 'tip', 'action', 'v', 'tnote', 'v'],
  ['|', 'pens', 'pen', 'savee', 'addf', 'vert', 'v', 'multi', 'bin', 'cut', 'copy', 'paste', 'undo', 'redo', '|', 'abc', 'diag', '/', 'abb', 'abr', '/', 'aby', 'abe', 'abm', 'abo', 'abp', '|', 'plug', 'hexa', 'bino', '|', 'py', 'bb', 'leaf', '|', 'help', '|', 'cross'],
  ['|', 'sel', 'v', 'form', 'v', 'desel', 'v', 'selloc', '|', 'topo', '|', 'ad', 'mo', 'ro', '#', 'sc', 'adj', 'p2', 'tm', 'tp', 'ex', 'back', '|', 'share'],
]

const tree = [
  ['', 'star', 'Favorites'],
  ['r', 'bms', 'Spatial Bookmarks'],
  ['r', 'proj', 'Project Home'],
  ['r', 'home', 'Home'],
  ['r', 'folder', 'C:\\'],
  ['r', 'folder', 'G:\\'],
  ['d', 'gpkg', 'GeoPackage'],
  ['r', 'db', 'INSPIRE_T', true],
  ['d', 'feather', 'SpatiaLite'],
]

const layers = [
  ['#b03060', '17 Malá Fatra'],
  ['#8fbc8f', '15 Zemplínska oblastná organizácia cestovného ruchu'],
  ['#dcdcdc', '02 SEVERNÝ SPIŠ - PIENINY'],
  ['#ff4500', '19 Vysoké Tatry - Podhorie'],
  ['#f0e68c', '31 Malé Karpaty'],
  ['#8b008b', '16 Stredné Slovensko'],
  ['#90ee90', '35 Región Šariš'],
  ['#32cd32', '13 Turiec'],
  ['#7fffd4', '38 Štúrovo - Parkan'],
  ['#483d8b', '08 Oblastná organizácia cestovného ruchu Trenčianske Teplice'],
  ['#8b0000', '06 Oblastná organizácia cestovného ruchu „ŠARIŠ“ - BARDEJOV'],
  ['#808000', '07 REGIÓN GRON'],
  ['#4682b4', '10 Trnava Tourism'],
  ['#ff8c00', '21 Rezort Piešťany'],
  ['#d2b48c', '18 Región Banská Štiavnica'],
  ['#ffff54', '33 Oblastná organizácia cestovného ruchu Tekov'],
  ['#ffb6c1', '39 Oblastná organizácia cestovného ruchu Matúšova zem – Mátyusföld'],
  ['#8b4513', '04 Dudince Tourism'],
  ['#ff00ff', '29 PODUNAJSKO'],
  ['#f4a460', '27 Región Senec'],
  ['#7b68ee', '37 Bratislavská organizácia cestovného ruchu'],
  ['#808080', '01 Región Vysoké Tatry'],
  ['#da70d6', '28 Oblastná organizácia cestovného ruchu Záhorie'],
  ['#228b22', '05 REGIÓN HOREHRONIE'],
  ['#dda0dd', '34 Oblastná organizácia cestovného ruchu GEMER'],
  ['#00bfff', '26 Oblastná organizácia cestovného ruchu TATRY – SPIŠ – PIENINY'],
  ['#1e90ff', '30 Oblastná organizácia cestovného ruchu „Trenčín a okolie“'],
  ['#7cfc00', '23 TURISTICKÝ NOVOHRAD A PODPOĽANIE'],
  ['#0000cd', '22 REGION LIPTOV'],
  ['#00ced1', '20 Organizácia cestovného ruchu Kysuce'],
]

const viewMenu = [
  ['newmap', 'New &Map View', 'Ctrl+M'],
  ['new3d', 'New &3D Map View', 'Ctrl+Alt+M'],
  ['hand', 'Pan Map'],
  ['pansel', 'Pan Map to Selection'],
  ['zin', 'Zoom In', 'Ctrl+Alt++'],
  ['zout', 'Zoom Out', 'Ctrl+Alt+-'],
  null,
  ['ident', 'Identify Features', 'Ctrl+Shift+I'],
  ['', 'Measure', '>'],
  ['sigma', 'Statistical Summary'],
  null,
  ['zfull', 'Zoom &Full', 'Ctrl+Shift+F'],
  ['zsel', 'Zoom to &Selection', 'Ctrl+J'],
  ['zlay', 'Zoom to &Layer'],
  ['znat', 'Zoom to Native Resolution (100%)', '', true],
  ['zlast', 'Zoom Last', '', true],
  ['znext', 'Zoom Next', '', true],
  null,
  ['', '&Decorations', '>'],
  ['', 'Preview Mode', '>'],
  ['tip', 'Show Map Tips'],
  ['bmnew', 'New Spatial Bookmark...', 'Ctrl+B'],
  ['bms', 'Show Spatial Bookmarks', 'Ctrl+Shift+B'],
  ['bms', 'Show Spatial Bookmark Manager'],
  ['refresh', 'Refresh', 'F5'],
  null,
  ['eye', 'Show All Layers', 'Ctrl+Shift+U'],
  ['lid', 'Hide All Layers', 'Ctrl+Shift+H'],
  ['eyesel', 'Show Selected Layers'],
  ['lidsel', 'Hide Selected Layers'],
  ['toggle', 'Toggle Selected Layers'],
  ['', 'Toggle Selected Layers Independently'],
  ['liddes', 'Hide Deselected Layers'],
  null,
  ['', 'Panels', '>'],
  ['', 'Toolbars', '>'],
  ['', 'Toggle Full Scr&een Mode', 'F11'],
  ['', 'Toggle Panel &Visibility', 'Ctrl+Tab'],
  ['', 'Toggle Map Only', 'Ctrl+Shift+Tab'],
]

const panels = ['Advanced Digitizing', 'Browser', 'Browser (2)', 'Debugging/Development Tools', 'GPS Information', 'Layer Order', 'Layer Styling', 'Layers', 'Log Messages', 'Overview', 'Processing Toolbox', 'Results Viewer', 'Spatial Bookmark Manager', 'Statistics', 'Temporal Controller', 'Tile Scale', 'Undo/Redo']

const crumbs = ['csb_files', '03ogamt_ucenie', 'MDT', '2022', 'Podklady cvičenia', 'data']
const places = [['desktop', 'Desktop'], ['dl', 'Downloads'], ['pics', 'Pictures'], ['docs', 'Documents'], ['gdrive', 'Google Drive']]

const shots = [{ id: 'a', menu: true }, { id: 'b', menu: false }]

const purple = '#b45ab4'
const lime = '#acff5b'
const moss = '#72b572'
const rose = '#e8c3ea'

// Each sheet of the map is digitised in its own grid and placed with a transform.
const sheets = [
  {
    t: 'translate(15 -168) scale(.3444 .3333)',
    fills: [
      [purple, '350,504 345,538 375,560 378,590 455,580 480,600 510,618 545,620 553,630 560,662 610,655 680,650 710,670 712,695 760,700 768,715 757,740 790,755 820,780 845,780 870,770 980,765 1015,748 1068,766 1110,725 1150,708 1205,685 1240,678 1273,655 1270,638 1208,648 1165,620 1155,600 1142,600 1110,555 1080,532 1015,520 975,530 925,522 895,504'],
      [purple, '1340,504 1347,530 1355,560 1345,600 1325,615 1310,640 1395,613 1540,613 1540,504'],
      [moss, '1395,613 1410,580 1436,575 1540,560 1540,504 1716,504 1716,505 2400,505 2400,560 1716,560 1716,700 1445,700 1415,660'],
      [purple, '-40,1025 60,1030 65,1080 82,1145 110,1175 127,1190 140,1125 180,1122 200,1113 260,1113 285,1085 300,1085 340,1038 385,1062 290,1130 265,1165 275,1180 260,1200 270,1240 290,1290 230,1330 205,1395 205,1430 140,1455 100,1450 30,1430 -45,1440'],
      [lime, '1480,880 1436,935 1420,965 1388,975 1355,1005 1312,1050 1312,1085 1283,1120 1243,1195 1180,1230 1130,1290 1040,1340 1020,1395 1040,1420 1900,1420 1900,880'],
    ],
    lines: ['82,1145 30,1200 -20,1180', '1283,1120 1350,1200 1440,1290'],
  },
  {
    t: 'translate(-4 229) scale(.4847 .4369)',
    fills: [
      [purple, '0,0 40,0 48,154 185,154 188,180 150,190 120,208 90,203 40,175 15,180 0,160'],
      [purple, '0,315 30,320 50,330 40,360 22,400 25,440 30,460 15,480 20,495 8,515 0,520'],
      [purple, '0,528 30,540 55,560 53,590 48,615 75,640 100,680 130,700 135,725 168,755 175,790 158,815 152,833 130,840 103,885 72,890 58,882 50,895 30,895 0,908'],
      [lime, '735,150 710,162 695,185 707,218 697,260 702,305 692,342 672,380 673,402 728,462 667,457 663,430 640,388 605,375 570,368 543,367 518,380 517,365 503,355 502,325 490,292 492,280 480,270 455,270 452,276 378,264 385,285 375,290 366,340 355,352 335,357 344,400 313,418 320,425 320,448 338,445 325,457 327,480 343,503 355,518 337,513 302,555 312,572 330,587 355,630 358,645 372,672 390,674 395,687 403,672 400,645 431,640 430,674 458,678 450,708 462,725 466,755 473,770 475,790 488,797 490,835 480,850 440,870 437,880 455,917 475,910 500,887 515,885 530,868 585,860 612,838 612,820 627,785 620,745 605,720 588,708 570,680 583,675 585,643 602,637 605,618 594,570 580,545 580,518 572,510 547,508 527,477 545,478 600,492 642,502 700,485 698,498 740,492 749,508 740,515 717,515 717,537 680,545 657,582 662,605 680,630 683,652 695,667 665,660 655,693 690,714 700,722 725,755 740,790 762,795 766,812 750,828 750,857 760,863 670,847 645,850 675,890 700,893 763,937 718,983 725,1005 750,1022 766,1047 658,1056 676,1078 655,1095 652,1106 685,1140 695,1175 707,1190 715,1220 722,1230 735,1268 748,1300 748,1325 741,1345 743,1375 760,1440 1600,1440 1600,150'],
      ['#fff', '1182,408 1215,397 1230,428 1260,432 1300,428 1327,415 1350,432 1415,434 1430,440 1440,460 1435,485 1424,480 1415,507 1405,490 1370,510 1335,512 1320,535 1310,560 1283,575 1280,600 1265,610 1260,597 1210,612 1177,635 1175,650 1172,690 1170,715 1160,738 1120,745 1110,760 1090,762 1066,790 1062,815 1040,832 1012,838 1000,825 1002,785 980,778 960,745 945,760 933,845 915,865 905,890 890,885 872,852 885,835 890,810 920,795 930,765 965,715 968,705 950,678 973,645 1035,648 1068,630 1070,575 1090,548 1125,543 1140,525 1160,490 1157,465 1187,435'],
      ['#fff', '1308,1440 1300,1390 1320,1367 1360,1380 1387,1392 1400,1410 1440,1440'],
    ],
    lines: [
      '15,25 25,35 48,15',
      '1010,155 1015,185 1033,178 1030,205 1018,210 1015,260 1000,300 1013,350 1018,410 1035,440 1050,405 1070,375 1110,367 1150,412 1185,390 1215,397',
      '1013,355 985,395 957,450 975,465 968,485 905,497 900,515 858,545 853,575 872,582 875,625 905,660 950,682',
      '970,480 1010,490 1005,520 1050,550 1070,572',
      '700,485 728,460', '750,857 820,887 835,915 857,1000 895,1030 915,1033 950,1080 985,1098 1030,1095 1075,1120 1137,1182 1162,1155',
      '820,887 840,865 872,852',
      '1000,820 973,850 975,890 1050,975 1120,1050 1140,1110 1185,1195 1235,1198 1257,1220 1290,1290 1303,1345 1340,1355 1385,1392',
      '903,1030 908,1080 918,1115 960,1150 990,1205 1030,1265 1120,1310 1165,1325 1220,1390 1250,1420',
      '1030,1265 1020,1280 1045,1300 1038,1370 1008,1380 1033,1420',
      '1040,832 1080,895 1150,940 1205,962 1300,1000 1370,1055 1378,1030 1410,1017 1433,1040',
      '1160,738 1190,800 1233,870 1225,900 1180,925 1150,940',
      '1257,1220 1270,1180 1320,1130 1345,1125 1400,1165 1400,1178 1440,1182 1495,1230',
      '1310,560 1335,575 1320,590 1338,600 1335,640 1315,655 1330,700 1300,710 1303,850 1360,935 1370,960 1410,965 1433,1000',
      '458,678 460,665 525,648 535,670 552,687 570,680',
      '1435,490 1437,535 1428,560 1440,610 1455,640 1440,665 1440,765 1415,810 1460,890 1515,940 1512,985',
    ],
  },
  {
    t: 'translate(676 229) scale(.5128 .4369)',
    fills: [
      [lime, '440,-12 610,-8 650,8 675,22 668,68 690,82 712,117 755,117 798,97 815,107 842,115 858,145 870,147 893,182 920,158 950,140 955,120 995,98 1022,117 1028,145 1045,155 1108,158 1135,185 1158,235 1180,255 1183,310 1172,315 1178,345 1170,382 1143,385 1105,440 1090,475 1078,480 1070,465 1040,457 1008,462 995,490 972,540 970,605 1000,635 1000,685 990,695 990,745 1000,800 1030,850 1037,877 1013,910 1003,965 1003,1035 985,1080 945,1078 920,1068 965,1130 967,1180 977,1225 950,1265 955,1310 945,1345 950,1380 930,1382 933,1440 833,1440 830,1410 800,1398 760,1408 735,1390 725,1350 722,1300 735,1285 718,1275 718,1262 685,1222 655,1208 665,1190 700,1168 710,1138 728,1135 725,1105 708,1085 715,1065 685,1040 648,1005 640,975 610,940 598,975 580,980 590,1005 552,1065 483,1040 490,1157 430,1148 380,1165 345,1158 345,1175 365,1185 340,1187 325,1172 333,1145 318,1130 302,1155 310,1185 335,1210 322,1233 350,1268 400,1300 437,1365 437,1388 412,1440 150,1440 150,150 440,150'],
      ['#fff', '30,1005 100,980 110,997 127,970 140,1025 180,1065 220,1080 225,1102 212,1135 240,1150 225,1170 240,1190 265,1215 245,1270 240,1340 205,1385 180,1370 150,1340 120,1325 45,1317 20,1345 -3,1390 -14,1392 -16,1350 15,1290 50,1265 85,1230 92,1200 60,1130 28,1060'],
      ['#fff', '635,175 660,178 690,185 712,200 720,225 748,240 735,262 760,285 750,300 735,325 748,335 735,360 722,390 735,410 800,425 822,438 805,470 750,457 715,440 690,428 680,427 660,465 685,495 720,525 750,550 755,600 765,640 768,692 750,697 720,735 710,752 670,762 650,775 622,755 635,705 605,660 590,630 580,600 568,505 600,470 605,415 625,385 617,350 650,270 663,240 640,215'],
      ['#fff', '922,620 945,630 962,628 962,655 938,702 948,660 943,635'],
      [rose, '1311,-20 1320,50 1300,110 1282,185 1250,230 1195,255 1187,310 1250,345 1295,365 1300,390 1350,370 1370,403 1395,413 1490,405 1510,392 1600,415 1600,-20'],
    ],
    lines: [
      '185,155 180,170 150,172 130,238 95,222 60,262 58,340 10,360 38,430 35,440',
      '283,155 278,210 255,275 180,320 175,350 95,385 85,455 60,480 60,530 35,537',
      '455,30 480,32 535,105 590,143 635,178', '250,155 277,170',
      '595,143 550,158 550,200 572,230 555,262 495,285 475,298 435,287 400,320 350,360 320,355 352,425 300,480 300,505 275,515 257,600 243,648',
      '60,530 120,530 170,515 213,545 225,610 243,648 290,680 295,720 325,760 360,805 425,885 495,843 535,870 520,850 520,800 538,765 520,700 488,640 500,565 515,520 550,485 600,480',
      '80,530 118,600 130,675 175,722 180,775 150,860 192,970 143,1028',
      '325,760 308,770 320,800 340,835 322,845 333,910 325,960 340,1010 350,1018 413,1022 433,1043 483,1040',
      '520,872 560,962 580,980', '645,775 655,825 620,855 630,885 588,885 590,905 610,940',
      '768,692 790,750 835,815 810,905 860,985 857,1010 920,1012 920,1068',
      '857,1010 835,1075 818,1080 808,1175 780,1155 728,1138',
      '805,470 845,508 910,517 940,545 962,605 970,608',
      '265,1210 280,1207 322,1233', '322,1420 345,1372 385,1382 412,1420', '217,1378 240,1420',
    ],
  },
  {
    t: 'translate(656 -171) scale(.5255 .3333)',
    fills: [
      [moss, '430,505 920,505 920,535 905,555 880,565 855,587 825,570 805,575 775,615 770,632 777,685 735,710 712,737 680,745 660,757 655,803 640,843 685,890 695,920 710,943 605,1020 550,1050 520,1105 482,1140 430,1140'],
      ['#fff', '430,832 500,828 520,872 500,893 490,918 430,920'],
      [lime, '605,1020 632,1028 640,1045 667,1060 660,1075 620,1095 600,1115 577,1125 590,1160 612,1165 602,1185 625,1190 650,1210 690,1220 696,1242 690,1290 430,1290 430,1142 482,1140 500,1112 520,1105 530,1075 550,1050'],
      [rose, '1554,970 1545,1010 1525,1020 1505,1050 1470,1035 1435,1055 1430,1075 1375,1080 1350,1108 1320,1110 1312,1135 1310,1170 1325,1270 1640,1270 1640,1120 1568,1035'],
    ],
    lines: ['520,873 545,863 575,895 598,895 618,858 640,845', '482,1140 520,1105 530,1075 550,1050 605,1020', '482,1238 500,1240 520,1262'],
  },
]
</script>

<template>
  <main class="sheet">
    <template v-for="s in shots" :key="s.id">
      <aside v-if="!s.menu" class="strip">
        <i class="strip-a"></i><i class="strip-b"></i>
        <svg class="ic8" viewBox="0 0 8 8"><path d="M0 6l4-4 4 4z" fill="#555" /></svg>
        <i class="strip-c"></i><i class="strip-d"></i>
        <svg class="ic8" viewBox="0 0 8 8"><path d="M0 2l4 4 4-4z" fill="#999" /></svg>
      </aside>
      <section class="shot" :class="s.menu ? 'shot-a' : 'shot-b'">
        <div class="black"></div>
        <header class="title">
          <svg class="ic16" viewBox="0 0 24 24" v-html="icons.qgis"></svg>
          <span class="tname">regionalizaciaCR — QGIS</span>
          <template v-if="!s.menu">
            <button v-for="w in ['winmin', 'winres', 'winx']" :key="w" class="winbtn" :aria-label="w"><svg class="ic24" viewBox="0 0 24 24" v-html="icons[w]"></svg></button>
          </template>
        </header>
        <b class="step boxed">{{ s.menu ? 'STEP 1' : 'STEP 8' }}</b>

        <nav class="menubar">
          <div v-for="m in menubar" :key="m" class="mb">
            <button class="mbtn" :class="{ on: s.menu && m === '&View' }"><span>{{ mark(m)[0] }}<u>{{ mark(m)[1] }}</u>{{ mark(m)[2] }}</span></button>
            <div v-if="s.menu && m === '&View'" class="popup view">
              <template v-for="(r, i) in viewMenu" :key="i">
                <hr v-if="!r">
                <div v-else class="mrow" :class="{ on: r[1] === 'Panels', off: r[3] }">
                  <span class="mic" :class="{ pressed: r[0] === 'hand' }"><svg v-if="r[0]" class="ic16" viewBox="0 0 24 24" v-html="icons[r[0]]"></svg></span>
                  <span class="mtext">{{ mark(r[1])[0] }}<u>{{ mark(r[1])[1] }}</u>{{ mark(r[1])[2] }}</span>
                  <svg v-if="r[2] === '>'" class="ic8" viewBox="0 0 8 8"><path d="M2 0l4 4-4 4z" fill="currentColor" /></svg>
                  <span v-else class="mkey">{{ r[2] }}</span>
                  <template v-if="r[1] === 'Panels'">
                    <b class="step step2">STEP 2</b>
                    <div class="popup sub">
                      <label v-for="p in panels" :key="p" class="srow" :class="{ on: p === 'Browser' }">
                        <input type="checkbox" class="chk" :checked="p === 'Browser' || p === 'Layers'"><span class="stext">{{ p }}</span>
                        <b v-if="p === 'Browser'" class="step step3">STEP 3</b>
                      </label>
                    </div>
                  </template>
                </div>
              </template>
            </div>
          </div>
        </nav>

        <div v-for="(bar, bi) in bars" :key="bi" class="bar">
          <template v-for="(t, ti) in bar" :key="ti">
            <i v-if="t === '|'" class="grip"></i>
            <i v-else-if="t === '/'" class="vsep"></i>
            <svg v-else-if="t === 'v'" class="drop" viewBox="0 0 12 8"><path d="M3 2h7L6.500 6z" fill="#555" /></svg>
            <span v-else-if="t === '#'" class="spin rot"><input type="text" value="0.000" aria-label="Angle"><svg viewBox="0 0 10 16"><path d="M2 6l3-4 3 4zM2 10l3 4 3-4z" fill="#777" /></svg></span>
            <button v-else class="tool" :class="{ pressed: t === 'hand*' }" :aria-label="t"><svg class="ic24" viewBox="0 0 24 24" v-html="icons[t.replace('*', '')]"></svg></button>
          </template>
        </div>

        <div class="body">
          <div class="dock">
            <h2 class="dhead">Browser<span class="dbtns"><svg class="ic12" viewBox="0 0 24 24" v-html="icons.float"></svg><svg class="ic12" viewBox="0 0 24 24" v-html="icons.close"></svg></span></h2>
            <div class="dtools">
              <button v-for="t in ['addlay', 'refresh', 'filter', 'collapse', 'info']" :key="t" :aria-label="t"><svg class="ic16" viewBox="0 0 24 24" v-html="icons[t]"></svg></button>
            </div>
            <div class="pane browser">
              <div class="list">
                <div v-for="r in tree" :key="r[2]" class="trow" :class="{ child: r[3], sel: !s.menu && r[2] === 'GeoPackage' }">
                  <svg class="ic8" viewBox="0 0 8 8"><path v-if="r[0]" :d="r[0] === 'r' ? 'M2 0l4 4-4 4z' : 'M0 2l4 4 4-4z'" fill="#555" /></svg>
                  <svg class="ic16" viewBox="0 0 24 24" v-html="icons[r[1]]"></svg>
                  <span>{{ r[2] }}</span>
                  <b v-if="!s.menu && r[2] === 'GeoPackage'" class="step step4">STEP 4</b>
                </div>
              </div>
              <div class="vbar"><svg viewBox="0 0 14 14"><path d="M3 9l4-4 4 4z" fill="#555" /></svg><i class="thumb bt"></i><i class="trough"></i><svg viewBox="0 0 14 14"><path d="M3 5l4 4 4-4z" fill="#555" /></svg></div>
              <div v-if="!s.menu" class="popup ctx">
                <button class="crow on">New Connection...</button>
                <button class="crow">Create Database...</button>
                <b class="step step5">STEP 5</b>
              </div>
            </div>
            <div class="hbar"><svg viewBox="0 0 14 14"><path d="M9 3L5 7l4 4z" fill="#555" /></svg><i class="hthumb"></i><i class="htrough bh"></i><svg viewBox="0 0 14 14"><path d="M5 3l4 4-4 4z" fill="#555" /></svg><i class="corner"></i></div>
            <i class="split"></i>
            <h2 class="dhead">Layers<span class="dbtns"><svg class="ic12" viewBox="0 0 24 24" v-html="icons.float"></svg><svg class="ic12" viewBox="0 0 24 24" v-html="icons.close"></svg></span></h2>
            <div class="dtools">
              <template v-for="t in ['brush', 'group', 'eye', 'filter', 'eps', 'v', 'expand', 'collapse', 'remove']" :key="t">
                <svg v-if="t === 'v'" class="drop" viewBox="0 0 12 8"><path d="M0 2h7L3.500 6z" fill="#555" /></svg>
                <button v-else :aria-label="t"><svg class="ic16" viewBox="0 0 24 24" v-html="icons[t]"></svg></button>
              </template>
            </div>
            <div class="pane grow">
              <div class="list">
                <label class="lrow top">
                  <svg class="ic8" viewBox="0 0 8 8"><path d="M0 2l4 4 4-4z" fill="#555" /></svg>
                  <input type="checkbox" class="chk" checked>
                  <svg class="ic16" viewBox="0 0 24 24" v-html="icons.poly"></svg>
                  <b><u>skDmosMemberBoundaries</u></b>
                </label>
                <label v-for="l in layers" :key="l[1]" class="lrow">
                  <input type="checkbox" class="chk" checked>
                  <i class="swatch" :style="{ background: l[0] }"></i>
                  <span>{{ l[1] }}</span>
                </label>
              </div>
              <div class="vbar"><svg viewBox="0 0 14 14"><path d="M3 9l4-4 4 4z" fill="#555" /></svg><i class="thumb lt"></i><i class="trough"></i><svg viewBox="0 0 14 14"><path d="M3 5l4 4 4-4z" fill="#555" /></svg></div>
            </div>
            <div class="hbar"><svg viewBox="0 0 14 14"><path d="M9 3L5 7l4 4z" fill="#555" /></svg><i class="hthumb"></i><i class="htrough lh"></i><svg viewBox="0 0 14 14"><path d="M5 3l4 4-4 4z" fill="#555" /></svg><i class="corner"></i></div>
          </div>

          <div class="map">
            <svg class="canvas" width="100%" height="100%">
              <g v-for="(sh, k) in sheets" :key="k" :transform="sh.t">
                <polygon v-for="(f, j) in sh.fills" :key="j" :points="f[1]" :fill="f[0]" />
                <polyline v-for="(l, j) in sh.lines" :key="'l' + j" :points="l" class="edge" />
              </g>
              <text x="-16" y="211" class="place">Mesto Sliač</text>
              <text x="23" y="262" class="place">Mesto Zvolen</text>
              <text x="369" y="413" class="place">Mesto Detva</text>
              <text x="1369" y="303" class="place">Mesto Hnúšťa</text>
              <text x="1072" y="775" class="place">Mesto Poltár</text>
            </svg>

            <form v-if="!s.menu" class="dialog" @submit.prevent>
              <header class="dtitle"><svg class="ic16" viewBox="0 0 24 24" v-html="icons.qgis"></svg><span>Open GeoPackage</span><button type="button" aria-label="Close"><svg class="ic24" viewBox="0 0 24 24" v-html="icons.winx"></svg></button></header>
              <div class="dnav">
                <svg class="ic16 n1" viewBox="0 0 24 24" v-html="icons.left"></svg>
                <svg class="ic16 n2" viewBox="0 0 24 24" v-html="icons.right"></svg>
                <svg class="ic12 n3" viewBox="0 0 24 24" v-html="icons.down"></svg>
                <svg class="ic16" viewBox="0 0 24 24" v-html="icons.up"></svg>
                <div class="addr">
                  <svg class="ic16" viewBox="0 0 24 24" v-html="icons.fold"></svg><span class="laq">«</span>
                  <template v-for="(c, i) in crumbs" :key="c"><i v-if="i" class="chev">›</i><span>{{ c }}</span></template>
                  <svg class="ic16 adown" viewBox="0 0 24 24" v-html="icons.down"></svg>
                  <span class="rel"><svg class="ic16" viewBox="0 0 24 24" v-html="icons.reload"></svg></span>
                </div>
                <label class="find"><svg class="ic16" viewBox="0 0 24 24" v-html="icons.search"></svg><input type="text" placeholder="Search data" aria-label="Search data"></label>
              </div>
              <div class="dcmd">
                <button type="button">Organise</button><svg class="drop" viewBox="0 0 12 8"><path d="M2 2h8L6 7z" fill="#1e395b" /></svg>
                <button type="button" class="newf">New folder</button>
                <svg class="ic16 far" viewBox="0 0 24 24" v-html="icons.views"></svg><svg class="drop" viewBox="0 0 12 8"><path d="M2 2h8L6 7z" fill="#1e395b" /></svg>
                <svg class="ic16 mid" viewBox="0 0 24 24" v-html="icons.pane"></svg><svg class="ic16" viewBox="0 0 24 24" v-html="icons.ask"></svg>
              </div>
              <div class="dmain">
                <ul class="places">
                  <li v-for="p in places" :key="p[1]"><svg class="ic16" viewBox="0 0 24 24" v-html="icons[p[0]]"></svg><span>{{ p[1] }}</span><svg class="ic12" viewBox="0 0 24 24" v-html="icons.pin"></svg></li>
                </ul>
                <div class="pbar"><svg class="ic16" viewBox="0 0 24 24" v-html="icons.caretup"></svg><i></i><svg class="ic16 pend" viewBox="0 0 24 24" v-html="icons.down"></svg></div>
                <div class="files">
                  <svg class="ic12 sort" viewBox="0 0 24 24" v-html="icons.caretup"></svg>
                  <table>
                    <colgroup><col class="c1"><col class="c2"><col class="c3"><col class="c4"></colgroup>
                    <thead><tr><th>Name</th><th>Date modified</th><th>Type</th><th>Size</th></tr></thead>
                    <tbody><tr><td class="fname"><svg class="ic16" viewBox="0 0 24 24" v-html="icons.gfile"></svg>USJ_hranice_0.gpkg<b class="step step6">STEP 6</b></td><td>01/02/2022 21:17</td><td>GPKG File</td><td class="num">126,204 KB</td></tr></tbody>
                  </table>
                </div>
              </div>
              <div class="dfoot">
                <div class="frow">
                  <label for="fname">File name:</label>
                  <span class="combo"><input id="fname" type="text" value="USJ_hranice_0.gpkg"><svg class="ic16" viewBox="0 0 24 24" v-html="icons.down"></svg><b class="step hint">HINT 1</b></span>
                  <span class="ftype"><select aria-label="File type"><option>GeoPackage Database (*.gpkg)</option></select><svg class="ic16" viewBox="0 0 24 24" v-html="icons.down"></svg></span>
                </div>
                <div class="frow act">
                  <b class="step step7">STEP 7</b>
                  <button class="pbtn main">Open</button>
                  <button type="button" class="pbtn">Cancel</button>
                </div>
              </div>
            </form>
          </div>
        </div>

        <footer class="status">
          <label class="locate"><svg class="ic12" viewBox="0 0 24 24" v-html="icons.mag"></svg><input type="text" placeholder="Type to locate (Ctrl+K)" aria-label="Type to locate"></label>
          <div v-if="!s.menu" class="sright">
            <label for="coord">Coordinate</label><input id="coord" class="sbox coord" type="text" value="2138341,6200139">
            <svg class="ic16 trk" viewBox="0 0 24 24" v-html="icons.track"></svg>
            <label for="scale">Scale</label><span class="sbox scale"><select id="scale"><option>1:223790</option></select><svg class="drop" viewBox="0 0 12 8"><path d="M2 2h8L6 7z" fill="#555" /></svg></span>
            <svg class="ic16 lck" viewBox="0 0 24 24" v-html="icons.lock"></svg>
            <label for="magn">Magnifier</label><span class="spin sp"><input id="magn" type="text" value="100%"><svg viewBox="0 0 10 16"><path d="M1 6l4-5 4 5zM1 10l4 5 4-5z" fill="#555" /></svg></span>
            <label for="rota" class="rl">Rotation</label><span class="spin sp"><input id="rota" type="text" value="0.0 °"><svg viewBox="0 0 10 16"><path d="M1 6l4-5 4 5zM1 10l4 5 4-5z" fill="#555" /></svg></span>
            <label class="rend"><input type="checkbox" class="chk" checked>Render</label>
            <svg class="ic16" viewBox="0 0 24 24" v-html="icons.globe"></svg><span class="epsg">EPSG:3857</span>
            <svg class="ic16 bub" viewBox="0 0 24 24" v-html="icons.bubble"></svg>
          </div>
        </footer>

        <footer v-if="s.menu" class="taskbar">
          <button class="start" aria-label="Start"><svg class="ic16" viewBox="0 0 24 24" v-html="icons.win"></svg></button>
          <label class="tsearch"><svg class="ic16" viewBox="0 0 24 24" v-html="icons.srch"></svg><input type="text" placeholder="Type here to search" aria-label="Type here to search"></label>
          <button v-for="t in ['tview', 'exp']" :key="t" class="tb" :aria-label="t"><svg class="ic16" viewBox="0 0 24 24" v-html="icons[t]"></svg></button>
          <span class="tgap"></span>
          <button v-for="t in ['ink', 'shot', 'disk', 'snip', 'qgis']" :key="t" class="tb" :class="{ cur: t === 'qgis' }" :aria-label="t"><svg class="ic24" viewBox="0 0 24 24" v-html="icons[t]"></svg></button>
        </footer>
      </section>
    </template>
  </main>
</template>

<style>
body { margin: 0; background: #fff; }
</style>

<style scoped>
.sheet { display: flex; height: 100vh; overflow: hidden; background: #fff; color: #111; font: 11px/16px "Noto Sans", "Open Sans", sans-serif; }
* { box-sizing: border-box; }
button, input, select { font: inherit; color: inherit; margin: 0; padding: 0; border: 0; background: none; outline: 0; appearance: none; }
svg { display: block; flex: none; }
i { font-style: normal; }
.ic8 { width: 8px; height: 8px; }
.ic12 { width: 12px; height: 12px; }
.ic16 { width: 16px; height: 16px; }
.ic24 { width: 24px; height: 24px; }

.strip { display: flex; flex-direction: column; align-items: center; width: 10px; margin: 1px 0 43px 34px; background: #f1f1f1; border-right: 1px solid #444; border-bottom: 1px solid #444; }
.strip i { width: 100%; }
.strip-a { height: 43px; background: #e8eaed; }
.strip-b { height: 68px; background: #fff; border-bottom: 1px solid #ddd; margin-bottom: 6px; }
.strip-c { height: 266px; }
.strip-d { flex: 1; background: #c1c1c1; margin-bottom: 6px; }
.strip .ic8:last-child { margin-bottom: 6px; }

.shot { position: relative; display: flex; flex-direction: column; min-width: 0; overflow: hidden; background: #efefef; }
.shot-a { flex: 0 0 32.5%; }
.shot-b { flex: 1; margin: 1px 0 43px; border-left: 1px solid #444; }
.black { height: 7px; background: #000; flex: none; }
.shot-b .black { height: 9px; border-bottom: 1px solid #444; }
.title { display: flex; align-items: center; height: 23px; flex: none; background: #fff; padding-left: 2px; }
.tname { margin-left: 5px; flex: 1; padding-bottom: 1px; }
.shot-b .title { padding-right: 8px; }
.winbtn { width: 46px; display: flex; justify-content: center; }
.winbtn:last-child { width: 24px; margin-left: 11px; }

.step { font: 700 19px/22px Roboto, sans-serif; color: #f00; white-space: nowrap; text-decoration: none; }
.boxed { position: absolute; z-index: 3; top: 4px; left: 78px; width: 69px; height: 29px; line-height: 31px; background: #fff; text-align: center; }
.shot-b .boxed { left: 367px; top: 3px; }
.step2, .step3, .step4, .step5, .step6, .hint { position: absolute; z-index: 5; }

.menubar { display: flex; height: 20px; flex: none; padding-left: 3px; background: #efefef; border-bottom: 1px solid #dcdcdc; }
.mb { position: relative; }
.mbtn { height: 20px; padding: 0 7px; line-height: 19px; }
.on { background: #0078d7; color: #fff; }

.popup { position: absolute; z-index: 4; background: #fff; border: 1px solid #a0a0a0; box-shadow: 3px 3px 3px rgba(0, 0, 0, .5); color: #111; }
.view { left: 0; top: 20px; width: 371px; }
hr { margin: 0 4px; border: 0; border-top: 1px solid #bbb; height: 2px; }
.mrow { position: relative; display: flex; align-items: center; height: 23px; padding: 0 3px; }
.mrow.on, .srow.on, .crow.on { color: #fff; background: #0078d7; }
.off { color: #888; }
.mic { width: 21px; height: 22px; display: flex; align-items: center; justify-content: center; margin-right: 3px; border-radius: 2px; }
.mic.pressed { background: #ddd; border: 1px solid #aaa; }
.mtext { width: 251px; white-space: nowrap; padding-bottom: 2px; }
.mkey, .stext { padding-bottom: 2px; }
.mrow > .ic8 { margin-left: auto; color: #555; }
.mrow.on > .ic8 { color: #bfe0ff; }
.step2 { left: 152px; top: 0; }
.sub { left: 369px; top: -32px; width: 248px; }
.srow { position: relative; display: flex; align-items: center; height: 23px; padding-left: 6px; gap: 6px; white-space: nowrap; }
.step3 { left: 87px; top: 2px; }

.chk { flex: none; display: block; width: 14px; height: 14px; background: #fff; border: 1px solid #b5b5b5; position: relative; }
.chk:checked::after { content: ""; position: absolute; inset: 2px 1px 1px 2px; background: #111; clip-path: polygon(0 48%, 20% 38%, 38% 62%, 78% 0, 100% 0, 48% 100%, 32% 100%); }

.bar { display: flex; align-items: center; height: 39px; flex: none; background: linear-gradient(#fafafa, #eee); border-bottom: 1px solid #bcbcbc; }
.grip { width: 13px; height: 26px; flex: none; background: radial-gradient(circle, #bbb 1px, transparent 1px) 4px 0 / 3px 3px repeat-y, radial-gradient(circle, #bbb 1px, transparent 1px) 7px 0 / 3px 3px repeat-y; }
.grip:not(:first-child) { margin-left: 4px; }
.vsep { width: 1px; height: 19px; background: #ccc; margin: 0 3px; }
.drop { width: 12px; height: 8px; }
.tool { width: 33px; height: 32px; flex: none; display: flex; align-items: center; justify-content: center; border-radius: 2px; }
.tool.pressed { background: #ddd; border: 1px solid #aaa; }
.spin { display: flex; align-items: center; background: #fff; border: 1px solid #aaa; border-radius: 2px; }
.spin input { flex: 1; width: 0; }
.spin svg { width: 12px; height: 16px; border-left: 1px solid #ccc; }
.rot { width: 70px; height: 20px; padding-left: 4px; color: #888; background: #f4f4f4; flex: none; }

.body { display: flex; flex: 1; min-height: 0; }
.dock { width: 428px; flex: none; display: flex; flex-direction: column; margin-right: 6px; }
.dhead { display: flex; align-items: center; justify-content: space-between; height: 20px; flex: none; margin: 0; padding: 0 1px 1px 4px; font-size: 11px; font-weight: 400; }
.dbtns { display: flex; gap: 2px; }
.dtools { display: flex; align-items: center; height: 31px; flex: none; padding: 0 0 3px 3px; }
.dtools button { width: 25px; display: flex; justify-content: center; }
.pane { position: relative; display: flex; border: 1px solid #b8b8b8; background: #fff; }
.browser { height: 164px; flex: none; }
.grow { flex: 1; min-height: 0; }
.list { flex: 1; min-width: 0; overflow: hidden; }
.trow { position: relative; display: flex; align-items: center; height: 18px; padding-left: 5px; }
.trow span, .lrow span { padding-bottom: 1px; }
.trow .ic16 { margin: 0 6px 0 11px; }
.trow.child { padding-left: 25px; }
.trow.sel { background: #1a82da; color: #fff; }
.vbar { width: 15px; display: flex; flex-direction: column; border-left: 1px solid #c4c4c4; background: #fafafa; }
.vbar svg { width: 14px; height: 14px; }
.thumb { background: linear-gradient(90deg, #fff, #eee); border: solid #c4c4c4; border-width: 1px 0; }
.bt { height: 28px; }
.lt { height: 402px; }
.trough { flex: 1; background: #e4e4e4; border-bottom: 1px solid #c4c4c4; }
.hbar { display: flex; height: 14px; flex: none; border: solid #b8b8b8; border-width: 0 1px 1px; background: #fafafa; }
.hbar svg { width: 14px; height: 13px; }
.hthumb { flex: 1; background: linear-gradient(#fff, #eee); border: solid #c4c4c4; border-width: 0 1px; }
.htrough { background: #e4e4e4; border-right: 1px solid #c4c4c4; }
.bh { width: 18px; }
.lh { width: 45px; }
.corner { width: 14px; border-left: 1px solid #c4c4c4; background: #efefef; }
.split { width: 16px; height: 3px; margin: 1px auto 2px 206px; background: radial-gradient(circle, #aaa 1px, transparent 1px) 0 0 / 3px 3px repeat-x; }
.ctx { left: 117px; top: 116px; width: 160px; z-index: 4; }
.crow { display: block; width: 100%; height: 23px; padding: 0 0 2px 27px; text-align: left; }
.step4 { left: 301px; top: -2px; }
.step5 { left: 129px; top: 5px; }

.lrow { display: flex; align-items: center; height: 18px; white-space: nowrap; padding-left: 43px; }
.lrow.top { padding-left: 5px; gap: 6px; background: #f0f0f0; }
.lrow.top .chk { margin: 0 0 0 5px; }
.swatch { width: 18px; height: 18px; border: solid #eee; border-width: 0 0 1px; margin: 0 6px; flex: none; }

.map { position: relative; flex: 1; min-width: 0; border: 1px solid #b4b4b4; border-right: 0; background: #fff; overflow: hidden; }
.canvas { position: absolute; inset: 0; }
.edge { fill: none; stroke: #f4ffe8; stroke-width: 1; vector-effect: non-scaling-stroke; }
.place { font: 300 13px Roboto, sans-serif; fill: #222; fill-opacity: .65; }

.dialog { position: absolute; left: 19px; top: 0; width: 890px; background: #fff; border-top: 1px solid #999; color: #222; font-family: "Open Sans", sans-serif; }
.dtitle { display: flex; align-items: center; height: 30px; padding: 0 3px 0 7px; font-size: 12px; }
.dtitle span { flex: 1; margin-left: 6px; }
.dnav { display: flex; align-items: center; height: 42px; padding: 0 12px 0 9px; font-size: 12px; }
.n1 { margin-right: 15px; }
.n2 { margin-right: 10px; }
.n3 { margin-right: 6px; }
.addr { display: flex; align-items: center; width: 560px; height: 30px; border: 1px solid #d9d9d9; margin-left: 5px; padding-left: 3px; white-space: nowrap; }
.laq { margin: 0 5px; }
.chev { width: 20px; text-align: center; }
.adown { margin-left: auto; margin-right: 8px; }
.rel { width: 33px; height: 28px; display: flex; align-items: center; justify-content: center; border-left: 1px solid #d9d9d9; }
.find { display: flex; align-items: center; flex: 1; height: 30px; border: 1px solid #d9d9d9; margin-left: 12px; padding-left: 13px; gap: 12px; }
.find input { flex: 1; min-width: 0; }
input::placeholder { color: #777; opacity: 1; }
.dcmd { display: flex; align-items: center; height: 30px; margin-top: 1px; padding: 0 15px 0 16px; background: #f5f6f7; color: #1e395b; font-size: 12px; }
.dcmd .drop { margin-left: 4px; }
.newf { margin-left: 28px; }
.far { margin-left: auto; }
.dcmd .far + .drop { margin-left: 7px; }
.mid { margin: 0 20px; }
.dmain { display: flex; height: 119px; overflow: hidden; }
.places { width: 228px; margin: 0; padding: 1px 5px 0 31px; list-style: none; font-size: 12px; }
.places li { display: flex; align-items: center; height: 24px; gap: 5px; }
.places .ic12 { margin-left: auto; }
.pbar { width: 16px; display: flex; flex-direction: column; background: #f0f0f0; margin-right: 18px; }
.pbar i { height: 18px; background: #cdcdcd; margin-top: 3px; }
.pend { margin-top: auto; }
.files { position: relative; flex: 1; }
.sort { position: absolute; left: 123px; top: -2px; }
table { border-collapse: collapse; table-layout: fixed; width: 602px; font-size: 12px; line-height: 16px; }
.c1 { width: 258px; }
.c2 { width: 144px; }
.c3 { width: 120px; }
.c4 { width: 80px; }
th { height: 26px; padding: 2px 0 0 5px; text-align: left; font-weight: 400; color: #56657a; border-right: 1px solid #e2e2e2; }
tbody::before { content: ""; display: block; height: 5px; }
tbody tr { outline: 1px solid #99d1ff; outline-offset: -1px; background: #cce8ff; }
td { height: 23px; padding: 0 5px; color: #6d6d6d; white-space: nowrap; }
.fname { position: relative; color: #111; }
.fname .ic16 { display: inline-block; vertical-align: -3px; margin-right: 4px; }
.num { text-align: right; }
.step6 { left: 140px; top: 3px; }
.dfoot { height: 74px; background: #f0f0f0; padding: 9px 16px 0 0; font-size: 12px; }
.frow { display: flex; align-items: center; justify-content: flex-end; }
.combo { position: relative; display: flex; align-items: center; width: 486px; height: 24px; margin: 0 12px 0 5px; padding: 0 2px 0 3px; background: #fff; border: 1px solid #7a7a7a; }
.combo input { flex: 1; }
.hint { left: 136px; top: -4px; }
.ftype { position: relative; display: flex; align-items: center; width: 188px; height: 23px; background: #e1e1e1; border: 1px solid #adadad; font-size: 11px; }
.ftype select { width: 100%; padding-left: 4px; }
.ftype svg { position: absolute; right: 1px; }
.act { margin-top: 5px; }
.pbtn { width: 88px; height: 24px; margin-left: 12px; background: #e1e1e1; border: 1px solid #adadad; }
.pbtn.main { border: 2px solid #0078d7; margin-left: 10px; }

.status { display: flex; height: 29px; flex: none; padding: 3px 0 0 4px; background: #efefef; overflow: hidden; }
.shot-b .status { height: 20px; }
.locate { display: flex; align-items: center; flex: none; width: 200px; height: 22px; border: 1px solid #a8a8a8; border-radius: 2px; background: #fff; padding-left: 8px; gap: 7px; }
.locate input { flex: 1; min-width: 0; }
.sright { display: flex; align-items: center; height: 22px; margin-left: auto; padding-right: 2px; white-space: nowrap; font-family: "Open Sans", sans-serif; }
.sbox { height: 22px; border: 1px solid #a8a8a8; border-radius: 2px; background: #fff; margin-left: 4px; }
.coord { width: 104px; padding-left: 6px; }
.trk { margin: 0 10px 0 4px; }
.scale { display: flex; align-items: center; width: 82px; padding-left: 3px; }
.scale select { flex: 1; }
.scale .drop { border-left: 1px solid #bbb; width: 20px; height: 20px; }
.lck { margin: 0 5px 0 8px; }
.sp { width: 83px; height: 22px; padding-left: 4px; margin-left: 4px; }
.rl { margin-left: 7px; }
.rend { display: flex; align-items: center; gap: 4px; margin: 0 14px 0 6px; }
.epsg { margin-left: 2px; }
.bub { margin-left: 22px; }

.taskbar { display: flex; height: 37px; flex: none; background: #d6d6d6; }
.start { width: 49px; display: flex; align-items: center; justify-content: center; background: #d0d0d0; }
.tsearch { display: flex; align-items: center; width: 342px; background: #fff; padding-left: 11px; gap: 12px; font-size: 14px; }
.tsearch input { flex: 1; }
.tsearch input::placeholder { color: #444; }
.tb { width: 49px; display: flex; align-items: center; justify-content: center; }
.tb.cur { background: #ececec; }
.tgap { flex: 1; }
.taskbar .tb:last-child { margin-right: 12px; }
</style>
